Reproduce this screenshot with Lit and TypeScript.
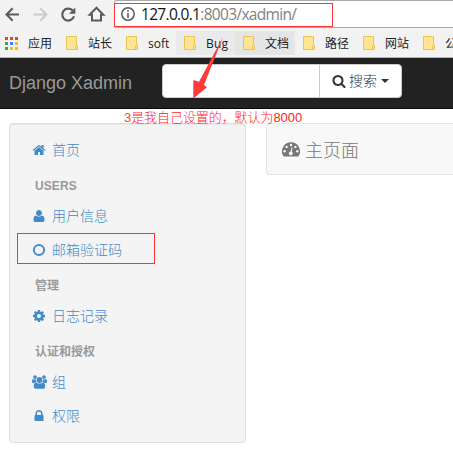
import { LitElement, html, css, svg } from "lit";
import { customElement, property } from "lit/decorators.js";

const ICONS: Record<string, { box: string; body: unknown }> = {
  home: {
    box: "0 0 1792 1792",
    body: svg`<path d="M1472 992v480q0 26-19 45t-45 19h-384v-384h-256v384h-384q-26 0-45-19t-19-45v-480q0-1 .5-3t.5-3l575-474 575 474q1 2 1 6zm223-69l-62 74q-8 9-21 11h-3q-13 0-21-7l-692-577-692 577q-12 8-24 7-13-2-21-11l-62-74q-8-10-7-23.5t11-21.5l719-599q32-26 76-26t76 26l244 204v-195q0-14 9-23t23-9h192q14 0 23 9t9 23v408l219 182q10 8 11 21.5t-7 23.5z"/>`,
  },
  user: {
    box: "0 0 1792 1792",
    body: svg`<path d="M1600 1405q0 120-73 189.500t-194 69.500h-874q-121 0-194-69.500t-73-189.500q0-53 3.500-103.500t14-109 26.500-108.500 43-97.500 62-81 85.500-53.500 111.500-20q9 0 42 21.500t74.500 48 108 48 133.500 21.500 133.500-21.500 108-48 74.500-48 42-21.500q61 0 111.500 20t85.500 53.500 62 81 43 97.500 26.500 108.500 14 109 3.500 103.500zm-320-893q0 159-112.500 271.500t-271.500 112.500-271.500-112.500-112.500-271.500 112.500-271.500 271.500-112.500 271.500 112.500 112.500 271.500z"/>`,
  },
  circle: {
    box: "0 0 14 14",
    body: svg`<circle cx="7" cy="7" r="5.100" fill="none" stroke="currentColor" stroke-width="2"/>`,
  },
  cog: {
    box: "0 0 1792 1792",
    body: svg`<path d="M1152 896q0-106-75-181t-181-75-181 75-75 181 75 181 181 75 181-75 75-181zm512-109v222q0 12-8 23t-20 13l-185 28q-19 54-39 91 35 50 107 138 10 12 10 25t-9 23q-27 37-99 108t-94 71q-12 0-26-9l-138-108q-44 23-91 38-16 136-29 186-7 28-36 28h-222q-14 0-24.5-8.5t-11.5-21.5l-28-184q-49-16-90-37l-141 107q-10 9-25 9-14 0-25-11-126-114-165-168-7-10-7-23 0-12 8-23 15-21 51-66.5t54-70.5q-27-50-41-99l-183-27q-13-2-21-12.5t-8-23.5v-222q0-12 8-23t19-13l186-28q14-46 39-92-40-57-107-138-10-12-10-24 0-10 9-23 26-36 98.5-107.5t94.5-71.5q13 0 26 10l138 107q44-23 91-38 16-136 29-186 7-28 36-28h222q14 0 24.5 8.5t11.5 21.5l28 184q49 16 90 37l142-107q9-9 24-9 13 0 25 10 129 119 165 170 7 8 7 22 0 12-8 23-15 21-51 66.5t-54 70.5q26 50 41 98l183 28q13 2 21 12.5t8 23.5z"/>`,
  },
  lock: {
    box: "0 0 1792 1792",
    body: svg`<path d="M640 768h512v-192q0-106-75-181t-181-75-181 75-75 181v192zm832 96v576q0 40-28 68t-68 28h-960q-40 0-68-28t-28-68v-576q0-40 28-68t68-28h32v-192q0-184 132-316t316-132 316 132 132 316v192h32q40 0 68 28t28 68z"/>`,
  },
  search: {
    box: "0 0 1792 1792",
    body: svg`<path d="M1216 832q0-185-131.5-316.5t-316.5-131.5-316.5 131.5-131.5 316.5 131.5 316.5 316.5 131.5 316.5-131.5 131.5-316.5zm512 832q0 52-38 90t-90 38q-54 0-90-38l-343-342q-179 124-399 124-143 0-273.5-55.5t-225-150-150-225-55.5-273.5 55.5-273.5 150-225 225-150 273.5-55.5 273.5 55.5 225 150 150 225 55.5 273.5q0 220-124 399l343 343q37 37 37 90z"/>`,
  },
  users: {
    box: "0 0 15 14",
    body: svg`<circle cx="7.5" cy="5" r="2.9"/><circle cx="3" cy="2.1" r="1.9"/><circle cx="12" cy="2.1" r="1.9"/>
      <path d="M3.9 7.2c1 .9 2.1 1.3 3.6 1.3s2.6-.4 3.6-1.3c1.6.2 2.1 2.2 2.1 4.4 0 1.4-.8 2.2-2 2.2H3.8c-1.2 0-2-.8-2-2.2 0-2.2.5-4.2 2.1-4.4z"/>
      <path d="M1 3.9c1.1.8 2 .8 3 .5-.2 1.1.1 1.9.6 2.6-.9 0-1.6.4-2.2 1H1.3C.5 8 0 7.5 0 6.700 0 5.400.2 4.100 1 3.900zM14 3.900c-1.100.8-2 .8-3 .5.2 1.100-.1 1.900-.6 2.600.9 0 1.600.4 2.200 1h1.100c.8 0 1.300-.5 1.300-1.300 0-1.300-.2-2.600-1-2.800z"/>`,
  },
  gauge: {
    box: "0 0 18 15",
    body: svg`<path d="M9 .3a9 9 0 0 1 7.6 13.800q-.3.500-.9.500H2.300q-.6 0-.9-.5A9 9 0 0 1 9 .3z"/>
      <g fill="#f8f8f8"><circle cx="2.600" cy="9.300" r="1.200"/><circle cx="4.600" cy="4.900" r="1.200"/><circle cx="9" cy="3" r="1.200"/><circle cx="13.400" cy="4.900" r="1.200"/><circle cx="15.400" cy="9.300" r="1.200"/>
      <path d="M9.600 5.400l1 .3-.9 3.900a2 2 0 1 1-1.100-.2z"/></g>`,
  },
  back: {
    box: "0 0 15 15",
    body: svg`<path d="M14 7.500H1.800M7.700 1.300L1.500 7.500l6.200 6.200" fill="none" stroke="currentColor" stroke-width="2"/>`,
  },
  forward: {
    box: "0 0 15 15",
    body: svg`<path d="M.500 7.500h12.700M7.300 1.300l6.200 6.200-6.200 6.200" fill="none" stroke="currentColor" stroke-width="2"/>`,
  },
  reload: {
    box: "0 0 15 15",
    body: svg`<path d="M13 9.300A6 6 0 1 1 11.500 3.300" fill="none" stroke="currentColor" stroke-width="2.200"/><path d="M14.300.500v6.300H8z"/>`,
  },
  house: {
    box: "0 0 17 16",
    body: svg`<path d="M1.700 8.700L8.500 1.700l6.800 7H13v5.800H4V8.700z" fill="none" stroke="currentColor" stroke-width="2"/>`,
  },
  info: {
    box: "0 0 14 14",
    body: svg`<circle cx="7" cy="7" r="6.200" fill="none" stroke="currentColor" stroke-width="1.500"/><path d="M6.200 3.200h1.600v1.600H6.200zM6.200 6h1.600v5H6.200z"/>`,
  },
  folder: {
    box: "0 0 13 14",
    body: svg`<path d="M.5.500h10v9h1v4H.500z" fill="#ffe592" stroke="#e8c650"/><path d="M9.500 13.500v-3.500h1" fill="none" stroke="#e8c650"/>`,
  },
};

@customElement("x-icon")
class XIcon extends LitElement {
  @property() name = "home";
  static styles = css`
    :host { display: block; flex: none; width: 14px; height: 14px; }
    svg { display: block; width: 100%; height: 100%; fill: currentColor; overflow: visible; }
  `;
  render() {
    const icon = ICONS[this.name];
    return html`<svg viewBox=${icon.box}>${icon.body}</svg>`;
  }
}

const BOOKMARKS = [
  { label: "站长", cls: "" },
  { label: "soft", cls: "w58" },
  { label: "Bug", cls: "w59 near" },
  { label: "文档", cls: "hover" },
  { label: "路径", cls: "" },
  { label: "网站", cls: "" },
  { label: "公司", cls: "" },
];

const MENU = [
  { icon: "home", label: "首页" },
  { heading: "USERS", latin: true },
  { icon: "user", label: "用户信息" },
  { icon: "circle", label: "邮箱验证码", marked: true },
  { heading: "管理" },
  { icon: "cog", label: "日志记录" },
  { heading: "认证和授权" },
  { icon: "users", label: "组" },
  { icon: "lock", label: "权限" },
];

@customElement("app-root")
class AppRoot extends LitElement {
  static styles = css`
    :host {
      display: block; position: relative; width: 453px; height: 457px; overflow: hidden;
      background: #fff; font-family: "Liberation Sans", "Noto Sans CJK SC", sans-serif; font-size: 14px; font-weight: 300;
    }
    * { box-sizing: border-box; }
    .toolbar { display: flex; height: 28px; background: #f2f2f2; color: #5a5a5a; padding-left: 5px; }
    .nav { display: flex; align-items: center; width: 109px; gap: 13px; }
    .nav x-icon { width: 15px; height: 15px; }
    .nav .off { color: #ccc; }
    .nav .house { width: 17px; height: 16px; margin-left: -1px; }
    .address {
      position: relative; flex: 1; display: flex; align-items: center; gap: 6px; padding-left: 6px;
      background: #fff; border: 1px solid #a9a9a9; border-right: 0; border-radius: 3px 0 0 3px;
    }
    .url { font: 15.5px/24px "Open Sans", sans-serif; letter-spacing: -0.68px; color: #808080; white-space: nowrap; }
    .url b { font-weight: 400; color: #111; }
    .urlmark { position: absolute; left: -1px; top: 2px; width: 219px; height: 24px; border: 1px solid #f33; }
    .bookmarks {
      display: flex; align-items: center; height: 30px; background: #f2f2f2; border-bottom: 1px solid #b5b5b5;
      padding: 1px 0 0 5px; font: 12px/23px "Open Sans", "Noto Sans CJK SC", sans-serif; color: #222; white-space: nowrap;
    }
    .apps { flex: none; display: grid; grid-template-columns: repeat(3, 3px); gap: 2px; width: 23px; }
    .apps i { height: 3px; }
    .r { background: #ea4335; } .g { background: #34a853; } .b { background: #4285f4; } .y { background: #fbbc05; }
    .appslabel { flex: none; width: 30px; padding-top: 1px; }
    .bm { display: flex; flex: none; align-items: center; gap: 9px; width: 60px; height: 24px; padding-left: 8px; }
    .bm span { padding-top: 1px; }
    .bm x-icon { width: 13px; height: 14px; }
    .w58 { width: 58px; } .w59 { width: 59px; letter-spacing: .2px; }
    .near { background: #eaeaea; } .hover { background: #e5e5e5; }
    .navbar { display: flex; height: 51px; padding: 6px 0 0 9px; background: #222; border-bottom: 1px solid #080808; }
    .brand { width: 153px; font-size: 18px; line-height: 38px; color: #999; }
    .input { width: 158px; height: 34px; background: #fff; border: 1px solid #ccc; border-radius: 4px 0 0 4px; }
    .search {
      display: flex; align-items: center; width: 83px; height: 34px; padding-left: 12px; margin-left: -1px;
      background: #fff; border: 1px solid #ccc; border-radius: 0 4px 4px 0; color: #333; line-height: 32px;
    }
    .search x-icon { width: 14px; height: 14px; margin-right: 3px; }
    .caret { margin-left: 4px; border: 4px solid transparent; border-top-color: #333; border-bottom: 0; }
    .page { display: flex; align-items: flex-start; gap: 20px; padding: 14px 0 0 9px; }
    .side { width: 237px; height: 320px; padding-top: 9px; background: #f4f4f4; border: 1px solid #ddd; border-radius: 4px; box-shadow: inset 0 1px 1px rgba(0,0,0,.05); }
    .item { position: relative; display: flex; align-items: center; height: 34px; padding-left: 22px; color: #428bca; line-height: 34px; }
    .slot { display: flex; justify-content: center; width: 14px; margin-right: 6px; }
    .slot .users { width: 15px; }
    .mark { position: absolute; left: 7px; top: 0; width: 138px; height: 31px; border: 1px solid #f33; }
    .heading { height: 32px; padding: 5px 0 0 25px; font-size: 12px; line-height: 28px; font-weight: 700; color: #999; }
    .latin { letter-spacing: .1px; }
    .panel { display: flex; align-items: center; flex: 1; height: 52px; padding-left: 15px; background: #f8f8f8; border: 1px solid #e4e4e4; border-right: 0; border-radius: 4px 0 0 4px; font-size: 18px; color: #777; }
    .panel x-icon { width: 18px; height: 15px; margin-right: 5px; }
    .note { position: absolute; left: 124px; top: 109px; font-size: 13px; line-height: 17px; letter-spacing: -.07px; color: #f22; white-space: nowrap; }
    .note span { color: #f05030; }
    .arrow { position: absolute; left: 190px; top: 35px; width: 36px; height: 66px; }
  `;

  render() {
    return html`
      <div class="toolbar">
        <div class="nav">
          <x-icon name="back"></x-icon><x-icon class="off" name="forward"></x-icon>
          <x-icon name="reload"></x-icon><x-icon class="house" name="house"></x-icon>
        </div>
        <div class="address">
          <x-icon name="info"></x-icon>
          <div class="url"><b>127.0.0.1</b>:8003/xadmin/</div>
          <div class="urlmark"></div>
        </div>
      </div>
      <div class="bookmarks">
        <div class="apps">${["r", "r", "r", "g", "b", "y", "g", "y", "y"].map((c) => html`<i class=${c}></i>`)}</div>
        <div class="appslabel">应用</div>
        ${BOOKMARKS.map((b) => html`<div class="bm ${b.cls}"><x-icon name="folder"></x-icon><span>${b.label}</span></div>`)}
      </div>
      <div class="navbar">
        <div class="brand">Django Xadmin</div>
        <div class="input"></div>
        <div class="search"><x-icon name="search"></x-icon>搜索<span class="caret"></span></div>
      </div>
      <div class="page">
        <div class="side">
          ${MENU.map((m) =>
            m.heading
              ? html`<div class="heading ${m.latin ? "latin" : ""}">${m.heading}</div>`
              : html`<div class="item">
                  <span class="slot"><x-icon class=${m.icon!} name=${m.icon!}></x-icon></span>${m.label}
                  ${m.marked ? html`<div class="mark"></div>` : ""}
                </div>`
          )}
        </div>
        <div class="panel"><x-icon name="gauge"></x-icon>主页面</div>
      </div>
      <div class="note"><span>3</span>是我自己设置的，默认为8000</div>
      <svg class="arrow" viewBox="190 35 36 66"><path fill="#ff3b3b" d="M223 37L204 85l3 2.300L193.300 98.500V80l5.700 1.700z" /></svg>
    `;
  }
}
